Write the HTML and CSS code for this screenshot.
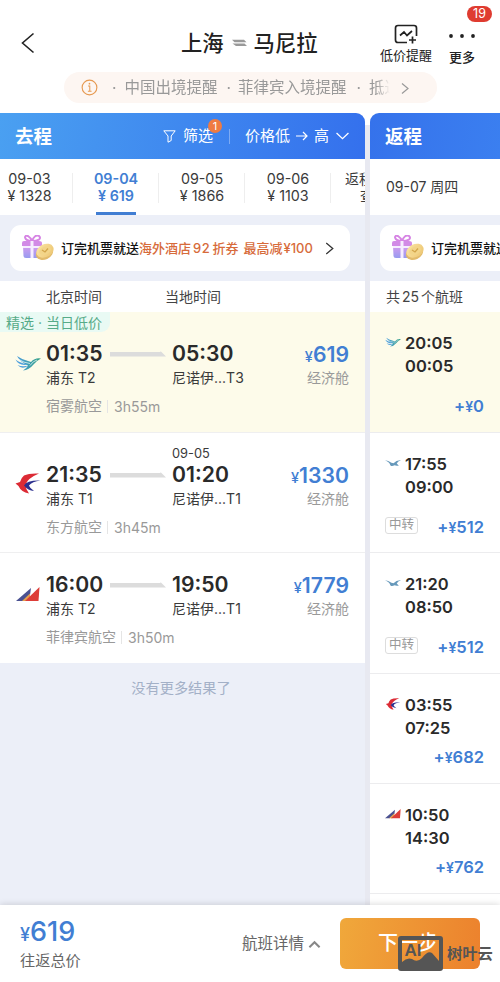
FILE: index.html
```html
<!DOCTYPE html>
<html lang="zh-CN">
<head>
<meta charset="utf-8">
<title>上海 - 马尼拉</title>
<link rel="stylesheet" href="styles.css">
</head>
<body>
<svg width="0" height="0" class="defs">
  <defs>
    <linearGradient id="gCebu" x1="0" x2="1"><stop offset="0" stop-color="#4a9ddb"/><stop offset="1" stop-color="#35a184"/></linearGradient>
    <linearGradient id="gCoin" x1="0" x2="1" y2="1"><stop offset="0" stop-color="#fbe7a8"/><stop offset="1" stop-color="#ecc46f"/></linearGradient>
    <linearGradient id="gBox" x1="0" x2="0" y2="1"><stop offset="0" stop-color="#d59bee"/><stop offset="1" stop-color="#979bf0"/></linearGradient>
  </defs>
  <symbol id="cebu" viewBox="0 0 26 16">
    <path d="M2 1Q6 4 13 6L16 7Q20 2.500 26 3.500Q21 6 18.500 9.500Q14 15 8 15.500Q12 13 13 10.500Q5 7 2 1Z" fill="url(#gCebu)"/>
    <path d="M.5 4.500Q5 8 13 9.500Q4 11.500 .5 4.500ZM2.500 10Q7 12 13 10.800Q7 15 2.500 10Z" fill="#4fa0dd"/>
    <path d="M3 4Q9 8 15 8.500M15 10.500Q18 6 22 5" fill="none" stroke="#fff" stroke-width=".7"/>
  </symbol>
  <symbol id="eastern" viewBox="0 0 26 21">
    <path d="M24 .5Q14 0 9 2.500Q6 5 5 9L.5 10.500L3.500 13Q6 19 14 20.500Q10.500 16 10.500 11.500Q13 5 24 .5Z" fill="#dc2b35"/>
    <path d="M25.500 7.500Q12 7 9 12.500Q13 17.500 19 18Q14.500 14.500 14 12.500Q17 8.500 25.500 7.500Z" fill="#2b2f8e"/>
  </symbol>
  <symbol id="pal" viewBox="0 0 24 15">
    <path d="M0 14L15 1L14 8L7 14Z" fill="#4a5191"/>
    <path d="M6 14L14 6.500V10L11 14Z" fill="#e6a04d"/>
    <path d="M9 14L23.500 0L22.500 14Z" fill="#dd3d38"/>
  </symbol>
  <symbol id="xiamen" viewBox="0 0 15 9">
    <path d="M0 2Q3 2.500 6 4.200L8 4.800Q11 1.500 15 2Q12 3 11 5L13 7Q10 7.300 9 6.700Q6 8 5 6.500Q4 3.500 0 2Z" fill="#6799bb"/>
  </symbol>
  <symbol id="gift" viewBox="0 0 33 26">
    <path d="M11 6C2 6 3-1 7 1Q10 3 11 6C12 3 15-1 18 1C21 4 17 6 11 6" fill="none" stroke="#d685e4" stroke-width="2"/>
    <path d="M1 8Q1 6 3 6H18Q21 6 21 8V11H1Z" fill="#d28be6"/>
    <path d="M2 11H19V23H5Q2.500 23 2.500 21Z" fill="url(#gBox)"/>
    <path d="M9.500 6H12.500V23H9.500ZM2 11H20V13H2Z" fill="#f6edff"/>
    <ellipse cx="23.500" cy="18" rx="9" ry="6.500" transform="rotate(-25 23.500 18)" fill="#e2bb6c"/>
    <ellipse cx="24" cy="15.700" rx="9" ry="6.500" transform="rotate(-25 24 15.700)" fill="url(#gCoin)"/>
    <ellipse cx="24" cy="15.700" rx="6" ry="4" transform="rotate(-25 24 15.700)" fill="#f3d589"/>
    <path d="M21 15L24 17L27 13.500" fill="none" stroke="#d3a64c" stroke-width="1.300"/>
  </symbol>
  <symbol id="bar" viewBox="0 0 56 6"><path d="M0 1H50.500V0L56 5.500H0Z" fill="#dcdcdc"/></symbol>
</svg>

<header class="header">
  <div class="nav">
    <svg class="back" viewBox="0 0 14 22"><path d="M12.500 1.500L1.500 11L12.500 20.500" fill="none" stroke="#222" stroke-width="1.600"/></svg>
    <h1 class="title"><span>上海</span><svg class="swap" viewBox="0 0 15 8"><path d="M0 .8H12L14.500 3.200H2.500ZM.5 4.600H12.500L15 7H4Z" fill="#999"/></svg><span>马尼拉</span></h1>
    <div class="action alert">
      <svg viewBox="0 0 24 21"><path d="M22.500 12V4Q22.500 1.500 20 1.500H4Q1.500 1.500 1.500 4V16Q1.500 18.500 4 18.500H13M6 11.500L10 8L13 11.500L18 7M18.500 12.500V19.500M15 16H22" fill="none" stroke="#222" stroke-width="1.700"/></svg>
      <span>低价提醒</span>
    </div>
    <div class="action more">
      <svg viewBox="0 0 26 4"><g fill="#222"><circle cx="2" cy="2" r="1.900"/><circle cx="13" cy="2" r="1.900"/><circle cx="24" cy="2" r="1.900"/></g></svg>
      <span>更多</span>
      <b class="badge">19</b>
    </div>
  </div>
  <div class="notice">
    <svg class="info" viewBox="0 0 18 18"><circle cx="9" cy="9" r="7.800" fill="none" stroke="#e69a52" stroke-width="1.200"/><path d="M7.500 7.500H9.300V13M7.300 13H11.200" fill="none" stroke="#e69a52" stroke-width="1.100"/><circle cx="9" cy="5" r=".9" fill="#e69a52"/></svg>
    <div class="notice-text"><span>·</span><span class="n1">中国出境提醒</span><span>·</span><span class="n2">菲律宾入境提醒</span><span>·</span><span class="n3">抵达</span></div>
    <svg class="chev" viewBox="0 0 8 12"><path d="M1 1L7 6L1 11" fill="none" stroke="#999" stroke-width="1.200"/></svg>
  </div>
</header>

<main class="columns">
  <section class="out">
    <div class="head">
      <h2>去程</h2>
      <div class="filter"><svg viewBox="0 0 13 13"><path d="M.8 .8H12.200L8.200 6V10.500L5 12.200V6Z" fill="none" stroke="#fff"/></svg><span>筛选</span><i>1</i></div>
      <div class="sort"><span>价格低</span><svg class="arrow" viewBox="0 0 12 10"><path d="M0 5H11M7 1L11 5L7 9" fill="none" stroke="#fff" stroke-width="1.200"/></svg><span>高</span><svg class="down" viewBox="0 0 12 7"><path d="M.5 .7L6 6L11.500 .7" fill="none" stroke="#fff" stroke-width="1.200"/></svg></div>
    </div>
    <div class="dates">
      <div class="date first"><span>09-03</span><span>¥ 1328</span></div>
      <div class="date on"><span>09-04</span><span>¥ 619</span></div>
      <div class="date"><span>09-05</span><span>¥ 1866</span></div>
      <div class="date"><span>09-06</span><span>¥ 1103</span></div>
      <div class="date last"><span>返程</span><span class="look">查</span></div>
    </div>
    <div class="promo"><div class="promo-card">
      <svg class="gift"><use href="#gift"/></svg><p>订完机票就送<em>海外酒店<span class="num">92</span>折券</em><em class="cut">最高减<span>¥100</span></em></p>
      <svg class="go" viewBox="0 0 8 12"><path d="M1 1L7 6L1 11" fill="none" stroke="#333" stroke-width="1.200"/></svg>
    </div></div>
    <div class="zones"><span>北京时间</span><span>当地时间</span></div>

    <article class="flight best">
      <div class="tag">精选 · 当日低价</div>
      <svg class="logo cebu"><use href="#cebu"/></svg>
      <b class="dep">01:35</b><svg class="bar"><use href="#bar"/></svg><b class="arr">05:30</b><strong class="price"><small>¥</small>619</strong>
      <span class="from">浦东<i>T2</i></span><span class="to">尼诺伊...T3</span><span class="cabin">经济舱</span>
      <div class="meta"><span>宿雾航空</span><span>3h55m</span></div>
    </article>
    <article class="flight dated">
      <span class="day">09-05</span>
      <svg class="logo eastern"><use href="#eastern"/></svg>
      <b class="dep">21:35</b><svg class="bar"><use href="#bar"/></svg><b class="arr">01:20</b><strong class="price"><small>¥</small>1330</strong>
      <span class="from">浦东<i>T1</i></span><span class="to">尼诺伊...T1</span><span class="cabin">经济舱</span>
      <div class="meta"><span>东方航空</span><span>3h45m</span></div>
    </article>
    <article class="flight">
      <svg class="logo pal"><use href="#pal"/></svg>
      <b class="dep">16:00</b><svg class="bar"><use href="#bar"/></svg><b class="arr">19:50</b><strong class="price"><small>¥</small>1779</strong>
      <span class="from">浦东<i>T2</i></span><span class="to">尼诺伊...T1</span><span class="cabin">经济舱</span>
      <div class="meta"><span>菲律宾航空</span><span>3h50m</span></div>
    </article>
    <p class="end">没有更多结果了</p>
  </section>

  <section class="ret">
    <div class="head"><h2>返程</h2></div>
    <div class="ret-date">09-07 周四</div>
    <div class="promo"><div class="promo-card">
      <svg class="gift"><use href="#gift"/></svg><p>订完机票就送</p>
    </div></div>
    <div class="count">共<span>25</span>个航班</div>
    <article class="back-flight best tall"><svg class="mini"><use href="#cebu"/></svg><div class="times"><b>20:05</b><b>00:05</b></div><div class="foot"><strong>+<small>¥</small>0</strong></div></article>
    <article class="back-flight tall"><svg class="mini"><use href="#xiamen"/></svg><div class="times"><b>17:55</b><b>09:00</b></div><div class="foot"><span class="chip">中转</span><strong>+<small>¥</small>512</strong></div></article>
    <article class="back-flight tall"><svg class="mini"><use href="#xiamen"/></svg><div class="times"><b>21:20</b><b>08:50</b></div><div class="foot"><span class="chip">中转</span><strong>+<small>¥</small>512</strong></div></article>
    <article class="back-flight"><svg class="mini"><use href="#eastern"/></svg><div class="times"><b>03:55</b><b>07:25</b></div><div class="foot"><strong>+<small>¥</small>682</strong></div></article>
    <article class="back-flight"><svg class="mini"><use href="#pal"/></svg><div class="times"><b>10:50</b><b>14:30</b></div><div class="foot"><strong>+<small>¥</small>762</strong></div></article>
  </section>
</main>

<footer class="footer">
  <div class="total"><strong><small>¥</small>619</strong><span>往返总价</span></div>
  <div class="detail">航班详情<svg viewBox="0 0 14 9"><path d="M1.500 7.500L7 2L12.500 7.500" fill="none" stroke="#888" stroke-width="2.200"/></svg></div>
  <div class="next">下一步</div>
  <div class="mark">
    <svg viewBox="0 0 45 35"><path fill-rule="evenodd" d="M3 0H42Q45 0 45 3V32Q45 35 42 35H3Q0 35 0 32V3Q0 0 3 0ZM4 4V26Q9 21 14 23Q19 27 24 22Q30 14 34 17L41 25V4Z" fill="#555"/><text x="6.500" y="19.500" class="ai">AI</text></svg>
    <span>树叶云</span>
  </div>
</footer>
</body>
</html>
```

FILE: styles.css
```css
* { box-sizing: border-box; margin: 0; padding: 0; }
html, body { width: 500px; height: 982px; overflow: hidden; }
body {
  display: flex; flex-direction: column; background: #fff; color: #3a3a3a;
  font-family: Inter, "Noto Sans CJK SC", sans-serif; font-size: 14px; line-height: 22px;
}
svg { display: block; flex: none; }
i, em { font-style: normal; }
span, b, strong, p, div { white-space: nowrap; }
.defs { position: absolute; }

.header { height: 113px; flex: none; }
.nav { height: 72px; display: grid; grid-template-columns: 181px 1fr 52px 60px; padding-right: 8px; }
.back { width: 14px; height: 22px; margin: 32px 0 0 21px; }
.title { display: flex; align-items: center; height: 30px; margin-top: 28px; font-size: 21.300px; line-height: 30px; font-weight: 500; color: #222; }
.swap { width: 15px; height: 8px; margin: 0 7px 0 8px; }
.action { display: flex; flex-direction: column; align-items: center; font-size: 13px; line-height: 18px; color: #222; }
.alert svg { width: 24px; height: 21px; margin-top: 24px; }
.alert span { margin-top: 1px; }
.more { position: relative; font-weight: 500; }
.more svg { width: 26px; height: 4px; margin-top: 34px; }
.more span { margin-top: 10px; }
.badge { position: absolute; left: 35px; top: 6px; width: 25px; height: 16px; border-radius: 8px; background: #df3b30; color: #fff; font-size: 12.500px; line-height: 16px; font-weight: 400; text-align: center; }
.notice { display: flex; align-items: center; width: 373px; height: 31px; margin-left: 64px; padding-left: 17px; border-radius: 16px; background: #fdf6f2; color: #999; font-size: 15.500px; }
.info { width: 17px; height: 17px; }
.notice-text { display: flex; width: 278px; margin-left: 14px; overflow: hidden; -webkit-mask-image: linear-gradient(90deg, #000 95%, transparent 100%); mask-image: linear-gradient(90deg, #000 95%, transparent 100%); }
.n1 { margin: 0 9px 0 8px; }
.n2 { margin: 0 10px 0 7px; }
.n3 { margin-left: 8px; }
.chev { width: 8px; height: 13px; margin-left: 11px; margin-top: 2px; }

.columns { height: 792px; flex: none; display: grid; grid-template-columns: 365px 130px; gap: 5px; background: linear-gradient(#fff 0 12px, #e8e9f1 12px); overflow: hidden; }
.out, .ret { min-width: 0; overflow: hidden; }
.out { background: #eceff8; border-top-right-radius: 9px; }
.ret { background: #fff; border-top-left-radius: 9px; }
.head { display: flex; align-items: center; height: 46px; padding-left: 15px; color: #fff; background: linear-gradient(100deg, #4aa0f1, #3470ed); }
.ret .head { background: linear-gradient(100deg, #3572eb, #3b7ff0); }
.head h2 { width: 148px; font-size: 18.500px; line-height: 26px; font-weight: 700; }
.filter { position: relative; display: flex; align-items: center; gap: 7px; width: 67px; font-size: 15px; border-right: 1px solid #ffffff55; height: 15px; }
.filter svg { width: 13px; height: 13px; }
.filter i { position: absolute; left: 45px; top: -10px; width: 14px; height: 14px; border-radius: 50%; background: #ef7b42; font-size: 11px; line-height: 14px; text-align: center; }
.sort { display: flex; align-items: center; margin-left: 15px; font-size: 15px; }
.arrow { width: 12px; height: 10px; margin: 0 6px; }
.down { width: 13px; height: 8px; margin-left: 7px; }

.dates { display: flex; height: 56px; background: #fff; }
.date { position: relative; flex: none; width: 86px; padding-top: 11px; display: flex; flex-direction: column; align-items: center; font-size: 14.300px; line-height: 17px; }
.date::after { content: ""; position: absolute; right: 0; top: 14px; height: 30px; border-right: 1px solid #eee; }
.date.first { width: 73px; padding-right: 14px; }
.date.on { color: #417ed3; font-weight: 600; }
.date.on::before { content: ""; position: absolute; left: 23px; bottom: 0; width: 40px; height: 3px; background: #417ed3; }
.date.last { width: 60px; padding-left: 14px; align-items: flex-start; font-size: 14px; }
.date.last::after { display: none; }
.date .look { margin-left: 15px; }

.promo { height: 66px; padding: 10px; background: #eceff8; }
.promo-card { display: flex; align-items: center; width: 340px; height: 46px; padding-left: 11px; background: #fff; border-radius: 11px; font-size: 13px; font-weight: 500; color: #111; }
.gift { width: 33px; height: 26px; margin-right: 7px; }
.promo em { color: #d76b3b; }
.num { margin: 0 2px; letter-spacing: .6px; }
.cut { margin-left: 5px; }
.cut span { margin-left: 1px; }
.go { width: 9px; height: 13px; margin-left: 12px; }
.zones { display: flex; height: 31px; padding-left: 46px; background: #fff; line-height: 31px; color: #444; }
.zones span { width: 119px; }

.flight { position: relative; display: grid; grid-template-columns: 46px 64px 62px 1fr auto; grid-template-rows: 28px 22px; height: 110px; padding: 17px 16px 0 0; background: #fff; border-bottom: 1px solid #efeff0; }
.flight.best { height: 121px; padding-top: 27px; }
.flight.dated { height: 120px; padding-top: 11px; grid-template-rows: 16px 28px 22px; }
.flight:nth-last-of-type(1) { border-bottom: 0; }
.best { background: #fdfbea !important; }
.tag { position: absolute; left: 0; top: 0; height: 20px; padding: 0 8px 0 6px; border-radius: 0 0 9px 0; background: #e9faf4; color: #57ab88; line-height: 21px; }
.day { grid-column: 4 / 6; font-size: 12.800px; line-height: 20px; }
.logo { grid-column: 1; grid-row: span 2; width: 26px; height: 21px; margin: 13px 0 0 15px; }
.logo.cebu { height: 16px; margin-top: 16px; }
.logo.pal { width: 24px; height: 15px; margin: 17px 0 0 16px; }
.dep, .arr { font-size: 21.200px; line-height: 29px; font-weight: 600; color: #2a2a2a; }
.bar { width: 56px; height: 6px; margin-top: 12px; }
.price { text-align: right; font-size: 21.200px; line-height: 31px; font-weight: 600; color: #417ed3; }
.price small { font-size: 14.500px; font-weight: 500; }
.from { grid-column: 2 / 4; }
.from i { margin-left: 4px; }
.cabin { color: #999; text-align: right; }
.meta { grid-column: 2 / 6; display: flex; align-items: center; margin-top: 6px; height: 22px; color: #999; }
.meta span + span { margin-left: 5px; padding-left: 6px; border-left: 1px solid #e5e5e5; line-height: 13px; }
.end { margin-top: 14px; padding-right: 3px; text-align: center; color: #a3b0c7; font-size: 14.200px; }

.ret-date { height: 56px; padding-left: 16px; line-height: 56px; }
.count { height: 31px; padding-left: 16px; line-height: 31px; color: #444; }
.count span { margin: 0 2px; }
.back-flight { display: grid; grid-template-columns: 20px 1fr; grid-template-rows: 46px auto; height: 110.300px; padding: 20px 16px 0 15px; border-bottom: 1px solid #ececee; }
.back-flight.tall { height: 120.300px; }
.back-flight.best { height: 121px; }
.mini { width: 16px; height: 12px; margin-top: 4px; }
.times { display: flex; flex-direction: column; font-size: 16.500px; line-height: 23px; color: #2a2a2a; }
.times b { font-weight: 600; }
.foot { grid-column: 1 / 3; display: flex; align-items: center; height: 22px; margin-top: 7px; }
.tall .foot { margin-top: 17px; }
.foot strong { margin-left: auto; font-size: 16.500px; font-weight: 600; color: #417ed3; }
.foot small { font-size: 14px; }
.chip { height: 17px; padding: 0 3px; border: 1px solid #ddd; border-radius: 3px; font-size: 12.500px; line-height: 14px; color: #999; margin-top: -3px; }

.footer { position: relative; z-index: 1; display: flex; height: 77px; flex: none; background: #fff; box-shadow: 0 -1px 6px #0002; }
.total { width: 242px; padding: 12px 0 0 20px; display: flex; flex-direction: column; font-size: 15.200px; color: #666; }
.total strong { font-size: 27px; line-height: 29px; font-weight: 500; color: #417ed3; }
.total small { font-size: 18px; }
.total span { margin-top: 1px; }
.detail { display: flex; align-items: center; gap: 4px; width: 98px; height: 78px; font-size: 15.500px; color: #666; }
.detail svg { width: 13px; height: 9px; }
.next { width: 140px; height: 51px; margin-top: 13px; padding-right: 4px; border-radius: 6px; background: linear-gradient(100deg, #f0a83b, #ec812d); color: #fff; font-size: 20px; line-height: 51px; text-align: center; font-weight: 500; }
.mark { position: absolute; left: 398px; top: 31px; display: flex; align-items: center; gap: 4px; color: #555; font-size: 15.300px; font-weight: 700; }
.mark svg { width: 45px; height: 35px; }
.ai { font: 700 17px "Liberation Sans", sans-serif; fill: #555; }
```
